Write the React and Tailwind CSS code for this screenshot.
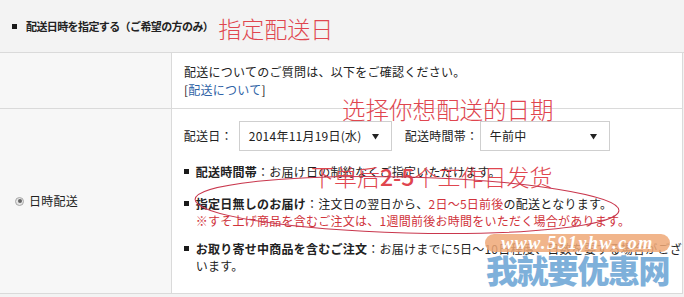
const jp = "font-['Noto_Sans_CJK_JP',sans-serif]";
const sc = "font-['Noto_Sans_CJK_SC',sans-serif]";

function Square({ className = "" }) {
  return <span className={`block w-[5px] h-[5px] bg-[#1a1a1a] ${className}`} />
}

function Bullet({ children, className = "" }) {
  return (
    <div className={`flex ${className}`}>
      <span className="w-[12px] shrink-0 h-[17px] flex items-center">
        <Square />
      </span>
      <div className="flex-1">{children}</div>
    </div>
  )
}

function Caret() {
  return (
    <svg width="7" height="7" viewBox="0 0 7 7">
      <path d="M0 1h7L3.5 6.5z" fill="#222" />
    </svg>
  )
}

function Select({ value, className = "" }) {
  return (
    <div className={`h-[30px] border border-[#cfcfcf] bg-white flex items-center justify-between pl-[9px] pr-[12px] ${className}`}>
      <span>{value}</span>
      <Caret />
    </div>
  )
}

export default function App() {
  return (
    <div className={`relative w-[684px] h-[297px] overflow-hidden bg-[#f3f3f3] text-[12px] text-[#222] tracking-[0.25px] ${jp}`}>
      {/* header */}
      <div className="h-[53px] bg-[#f3f3f3] border-b border-[#dadada] flex items-center pl-[12px]">
        <Square className="mr-[9px]" />
        <span className="text-[11px] font-bold tracking-[-0.6px]">配送日時を指定する（ご希望の方のみ）</span>
        <span className={`ml-[5px] mt-[5px] text-[23px] leading-none font-light tracking-normal text-[#e0464f] ${sc}`}>指定配送日</span>
      </div>

      {/* row 1 */}
      <div className="flex h-[56px] w-[683px] border-b border-[#dadada]">
        <div className="w-[172px] bg-[#f7f7f7] border-r border-[#dadada]" />
        <div className="flex-1 bg-white border-r border-[#dadada] pl-[12px] pt-[10px] leading-[18px]">
          <p>配送についてのご質問は、以下をご確認ください。</p>
          <p>
            [<span className="text-[#2f63a6]">配送について</span>]
          </p>
        </div>
      </div>

      {/* row 2 */}
      <div className="flex h-[185px] w-[683px] border-b border-[#dadada]">
        <div className="w-[172px] bg-[#f7f7f7] border-r border-[#dadada] flex items-center pl-[15px]">
          <span className="w-[9px] h-[9px] rounded-full border border-[#a8a8a8] bg-[#e6e6e6] flex items-center justify-center mr-[5px]">
            <span className="w-[4px] h-[4px] rounded-full bg-[#666]" />
          </span>
          <span>日時配送</span>
        </div>
        <div className="flex-1 bg-white border-r border-[#dadada] pl-[12px] pt-[12px]">
          <div className="flex items-center h-[30px]">
            <span className="w-[55px]">配送日：</span>
            <Select value="2014年11月19日(水)" className="w-[153px]" />
            <span className="ml-[13px] w-[75px]">配送時間帯：</span>
            <Select value="午前中" className="w-[130px] pr-[8px]" />
          </div>
          <div className="leading-[17px]">
            <Bullet className="mt-[12px]">
              <b>配送時間帯</b>：お届け日の制約なくご指定いただけます。
            </Bullet>
            <Bullet className="mt-[15px]">
              <b>指定日無しのお届け</b>：注文日の翌日から、<span className="text-[#d0333b]">2日～5日前後</span>の配送となります。
              <br />
              <span className="text-[#d0333b]">※すそ上げ商品を含むご注文は、1週間前後お時間をいただく場合があります。</span>
            </Bullet>
            <Bullet className="mt-[11px]">
              <span className="whitespace-nowrap">
                <b>お取り寄せ中商品を含むご注文</b>：お届けまでに5日～10日程度、日数を要する場合がござ
              </span>
              <br />
              います。
            </Bullet>
          </div>
        </div>
      </div>

      {/* hand-written annotations */}
      <div className={`absolute left-[342px] top-[98px] text-[23.5px] leading-none font-light tracking-normal text-[#e0464f] ${sc}`}>选择你想配送的日期</div>
      <div className={`absolute left-[311px] top-[165px] text-[23px] leading-none font-light tracking-normal text-[#e0464f] ${sc}`}>
        下单后<span className="font-medium">2-5</span>个工作日发货
      </div>
      <svg className="absolute left-0 top-0" width="684" height="297">
        <ellipse cx="407" cy="205" rx="212" ry="28" transform="rotate(1.5 407 205)" fill="none" stroke="#c9374d" strokeWidth="1" />
      </svg>

      {/* watermark */}
      <div className="absolute left-[485px] top-[234px] w-[185px] h-[18px] rounded-full bg-[#efa877]/85 flex items-center justify-center">
        <span className="font-['Liberation_Serif',serif] italic font-bold text-white text-[18px] tracking-[1.5px] leading-none">www.591yhw.com</span>
      </div>
      <div className={`absolute left-[486px] top-[253px] text-[32px] leading-none font-black tracking-[-1.5px] text-[#7eb0da] ${sc}`}>我就要优惠网</div>
    </div>
  )
}
